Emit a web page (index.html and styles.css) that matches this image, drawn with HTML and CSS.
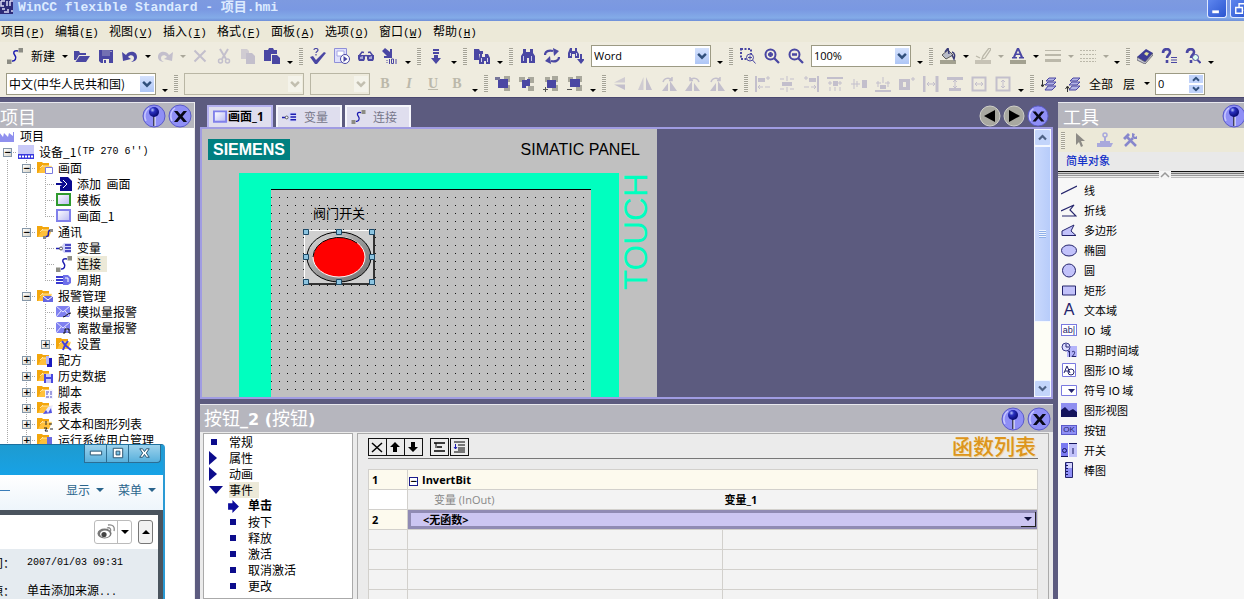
FILE: index.html
```html
<!DOCTYPE html>
<html lang="zh-CN">
<head>
<meta charset="utf-8">
<title>WinCC flexible Standard - 项目.hmi</title>
<link rel="stylesheet" href="styles.css">
</head>
<body>
<svg class="defs" aria-hidden="true">
  <defs>
    <radialGradient id="ball" cx=".35" cy=".3" r=".8"><stop offset="0" stop-color="#b8c4ff"/><stop offset=".3" stop-color="#2a30c0"/><stop offset="1" stop-color="#000060"/></radialGradient>
    <linearGradient id="ring" x1="0" y1="0" x2="1" y2="1"><stop offset="0" stop-color="#e0e0e0"/><stop offset=".5" stop-color="#9a9a9a"/><stop offset="1" stop-color="#6e6e6e"/></linearGradient>
    <linearGradient id="shade" x1="0" y1="0" x2="1" y2="1"><stop offset="0" stop-color="#fff"/><stop offset="1" stop-color="#b9b9f4"/></linearGradient>
  </defs>
  <symbol id="chev" viewBox="0 0 9 7"><path d="M1 1.500l3.500 3.500L8 1.500" fill="none" stroke="currentColor" stroke-width="2.200"/></symbol>
  <symbol id="conn" viewBox="0 0 16 16"><path d="M11 3C6 2 6 5 8 7.500S8 13.500 5 13" fill="none" stroke="#1c1cb0" stroke-width="1.500"/><path d="M0 11.500h4.500V16H0zM11.500 0H16v4.500h-4.500z" fill="#8c8c84"/></symbol>
  <symbol id="open" viewBox="0 0 16 16"><path d="M0 3h5l1 2h6v2H5l-3 5H0z"/><path d="M5.500 8H16l-4 6H1.500z"/></symbol>
  <symbol id="save" viewBox="0 0 16 16"><path fill-rule="evenodd" d="M1 2h14v13H3l-2-2zM4 2v6h8V2zM5 11v4h6v-4zM12.500 3v1h1V3z"/><path d="M4 2h8v6H4z" opacity=".75"/><path d="M6 12h2v3H6z"/></symbol>
  <symbol id="undo" viewBox="0 0 16 16"><path d="M0 4l1 9 8-2-3-2c2-3 6-2 6 1 0 2-1 3-3 4 5-.500 6-3 6-5 0-6-8-7-11-2z"/></symbol>
  <symbol id="redo" viewBox="0 0 16 16"><path d="M16 4l-1 9-8-2 3-2C8 6 4 7 4 10c0 2 1 3 3 4-5-.500-6-3-6-5 0-6 8-7 11-2z"/></symbol>
  <symbol id="x" viewBox="0 0 16 16"><path d="M2.500 2.500l11 11m0-11l-11 11" fill="none" stroke="currentColor" stroke-width="2"/></symbol>
  <symbol id="cut" viewBox="0 0 16 16"><path d="M4 1l6 10M12 1L6 11" fill="none" stroke="currentColor" stroke-width="2"/><circle cx="4.500" cy="13" r="2" fill="none" stroke="currentColor" stroke-width="1.500"/><circle cx="11.500" cy="13" r="2" fill="none" stroke="currentColor" stroke-width="1.500"/></symbol>
  <symbol id="copy" viewBox="0 0 16 16"><path d="M1 1h6l2 2v8H1z" opacity=".7"/><path d="M6 5h6l3 3v8H6z"/></symbol>
  <symbol id="paste" viewBox="0 0 16 16"><path d="M0 2h4l1-2h4l1 2h3v4H7v7H0z"/><path d="M8 7h5l3 3v6H8z"/></symbol>
  <symbol id="check" viewBox="0 0 16 16"><path d="M0 9l3-1 3 4 8-8 2 1-9 11H5z"/><path d="M4 2c0-2 4-2 4 0 0 1.500-2 1.500-2 3m0 1v1.500" fill="none" stroke="currentColor" stroke-width="1.200"/></symbol>
  <symbol id="run" viewBox="0 0 16 16"><path d="M.5.500h12v14H.5z" fill="#dfe0fb" stroke="#8f8fd8"/><path d="M3 3h7v5H3z" fill="#fff" stroke="#a6a6e4"/><circle cx="11" cy="11" r="4.500" fill="#fff" stroke="currentColor"/><path d="M9.500 8l4 3-4 3z"/></symbol>
  <symbol id="glass" viewBox="0 0 16 16"><path d="M1 8l3-4 2 .500M15 8l-3-4-2 .500M6 9c1-2 3-2 4 0" fill="none" stroke="currentColor" stroke-width="1.500"/><path d="M0 7h7v4l-1 2H1l-1-2zM9 7h7v4l-1 2h-5l-1-2z"/><path d="M2 9l3-1v3H2zM11 9l3-1v3h-3z" fill="#a8a8d8"/></symbol>
  <symbol id="trans" viewBox="0 0 16 16"><path d="M0 3l3-3 5 4V1h2v9H2V8h3z"/><path d="M7.500 11v5m2-5h2v4.500h-2zM14 11v5M5 12v1m0 1v1" fill="none" stroke="currentColor"/></symbol>
  <symbol id="down" viewBox="0 0 16 16"><path d="M5 1h6v2H5zM5 4h6v2H5zM6 7h4v3h3l-5 6-5-6h3z"/></symbol>
  <symbol id="bino" viewBox="0 0 16 16"><path d="M3 1h3v3h4V1h3v4l2 3v7H9v-5H7v5H1V8l2-3z"/><path d="M3 8h1v5H3zM11 8h1v5h-1z" fill="#c8c8e8"/></symbol>
  <symbol id="fbino" viewBox="0 0 16 16"><path d="M0 1h5l1 2h3v3H5v6H0z"/><path d="M6 6h2v3h3V6h3l2 4v6h-4v-3h-2v3H5v-5z"/><path d="M7 10h1v4H7zM13 10h1v4h-1z" fill="#d6d6ee"/></symbol>
  <symbol id="swap" viewBox="0 0 16 16"><path d="M1 7c0-4 4-5 8-4m6 6c0 4-4 5-8 4" fill="none" stroke="currentColor" stroke-width="2.200"/><path d="M9 0l6 3-5 5zM7 16l-6-3 5-5z"/></symbol>
  <symbol id="fnext" viewBox="0 0 16 16"><path d="M2 0h2v3h3V0h2v3l2 3v4H7V6H4v4H0V5z"/><path d="M12 6h2v5h3l-4 5-4-5h3z"/><path d="M2 5h1v3H2zM8 5h1v3H8z" fill="#d6d6ee"/></symbol>
  <symbol id="zsel" viewBox="0 0 16 16"><path d="M1 1h10v10H1z" fill="none" stroke="currentColor" stroke-width="2" stroke-dasharray="2 1.500"/><circle cx="10" cy="9.500" r="3.500" fill="#eeecde" stroke="currentColor"/><path d="M8 9.500h4m-2-2v4m2.500.5l3 3.500" fill="none" stroke="currentColor"/></symbol>
  <symbol id="zin" viewBox="0 0 16 16"><circle cx="6.500" cy="6.500" r="5" fill="none" stroke="currentColor" stroke-width="2"/><path d="M10 10l5 5M6.500 4v5M4 6.500h5" fill="none" stroke="currentColor" stroke-width="2.300"/></symbol>
  <symbol id="zout" viewBox="0 0 16 16"><circle cx="6.500" cy="6.500" r="5" fill="none" stroke="currentColor" stroke-width="2"/><path d="M10 10l5 5M4 6.500h5" fill="none" stroke="currentColor" stroke-width="2.300"/></symbol>
  <symbol id="bucket" viewBox="0 0 16 16"><path d="M0 12h16v4H0z" fill="#a3a190"/><path d="M2 7l6-5 5 5-7 4z" fill="#b9bcc8" stroke="#5c5c58"/><path d="M5 4l3-4 1 6M12 4c3 1 3 4 2 7l-2-4" fill="none" stroke="#3a3c78" stroke-width="1.500"/></symbol>
  <symbol id="pen" viewBox="0 0 16 16"><path d="M0 12h16v4H0z" opacity=".8"/><path d="M14 0l2 1-6 9-3 1 1-3zM1 8l4 2" fill="none" stroke="currentColor" stroke-width="1.300"/></symbol>
  <symbol id="acol" viewBox="0 0 16 16"><path d="M0 12h16v4H0z" fill="#a3a190"/><path fill-rule="evenodd" d="M7 0h2l4 9h1v1.500H9V9h1.500L10 7H6L5.300 9H7v1.500H2V9h1zM6.500 5.500h3L8 2.500z"/></symbol>
  <symbol id="lines" viewBox="0 0 16 16"><path d="M0 2h16v1H0zM0 6h16v2H0zM0 11h16v3H0z"/></symbol>
  <symbol id="dash" viewBox="0 0 16 16"><path d="M0 2.500h16M0 6.500h16M0 10.500h16M0 13.500h16" fill="none" stroke="currentColor" stroke-dasharray="2 1"/></symbol>
  <symbol id="book" viewBox="0 0 16 16"><path d="M0 9l9-8 7 4-8 9z" fill="#3d3d96"/><path d="M0 9l8 5 8-9v2l-8 9-8-4z" fill="#c8c8d8" stroke="#4c4c58" stroke-width=".7"/><path d="M7 6l2-2 3 1-2 3z" fill="#e0e09a"/></symbol>
  <symbol id="help1" viewBox="0 0 16 16"><path d="M2 5c0-5 7-5 7-1 0 3-3 3-3 6m0 2v3" fill="none" stroke="currentColor" stroke-width="2.600"/><path d="M10 9.500h6m-6 2.500h6m-6 2.500h6" stroke="currentColor"/></symbol>
  <symbol id="help2" viewBox="0 0 16 16"><path d="M2 5c0-5 7-5 7-1 0 3-3 3-3 6m0 2v3" fill="none" stroke="currentColor" stroke-width="2.600"/><circle cx="10.500" cy="9.500" r="3" fill="#dfe" stroke="currentColor"/><path d="M12.500 12l3 3" stroke="currentColor" stroke-width="2"/></symbol>
  <symbol id="ord1" viewBox="0 0 16 16"><path d="M9 0h6v6H9zM9 9h6v6H9z" fill="#a9a89c"/><path d="M3 3h10v9H3z"/><path d="M0 1h5v3H0z" fill="#77769a"/></symbol>
  <symbol id="ord2" viewBox="0 0 16 16"><path d="M0 1h6v5H0zM9 10h6v5H9zM9 1h6v6H9z" fill="#a9a89c"/><path d="M3 4h5V3h3v7H7v2H3z"/></symbol>
  <symbol id="ord3" viewBox="0 0 16 16"><path d="M2 1h5v5H2zM9 0h6v6H9zM9 9h6v6H9z" fill="#a9a89c"/><path d="M4 4h9v8H4z"/><path d="M0 13.500h5M2.500 11v5" stroke="#555"/></symbol>
  <symbol id="ord4" viewBox="0 0 16 16"><path d="M1 1h5v5H1zM9 0h6v6H9zM9 9h6v6H9z" fill="#a9a89c"/><path d="M3 3h10v8H3z"/><path d="M0 13.500h5" stroke="#555"/></symbol>
  <symbol id="flv" viewBox="0 0 16 16"><path d="M1 6.500L12 1v5.500z" opacity=".7"/><path d="M1 8.500h11V14z"/></symbol>
  <symbol id="flh" viewBox="0 0 16 16"><path d="M6.500 1v13H1z" opacity=".7"/><path d="M9 1v13h6z"/></symbol>
  <symbol id="rot" viewBox="0 0 16 16"><path d="M7 7v8H1zM9 5l7 10H9z"/><path d="M2 6c1-4 6-5 9-2m0-3v3.500H8" fill="none" stroke="currentColor" stroke-width="1.500"/></symbol>
  <symbol id="al1" viewBox="0 0 16 16"><path d="M1 0v16" stroke="currentColor" stroke-width="2"/><path d="M3 2h7v4H3z"/><path d="M3 11h5m2 0h5M5 9l-2 2 2 2m6-11h4m-2-2v4" fill="none" stroke="currentColor"/></symbol>
  <symbol id="al2" viewBox="0 0 16 16"><path d="M3 6h10v4H3z"/><path d="M8 0v5m0 6v5M1 3h4m6 0h4M1 13h4m6 0h4" stroke="currentColor"/></symbol>
  <symbol id="al3" viewBox="0 0 16 16"><path d="M0 1h16v2H0zM6 5h5v5H6z"/><path d="M3 5v4m10-4v4M3 11v4m5-4v4m5-4v4M1 7h4m6 0h4" stroke="currentColor"/></symbol>
  <symbol id="al4" viewBox="0 0 16 16"><path d="M11 4h5v8h-5z"/><path d="M0 8h9M3 3v10M6 5v6" stroke="currentColor"/></symbol>
  <symbol id="al5" viewBox="0 0 16 16"><path d="M0 14h16v2H0zM5 9h6v4H5z"/><path d="M3 5v6m10-6v6M1 7h5m4 0h5M8 1v6" stroke="currentColor"/></symbol>
  <symbol id="al6" viewBox="0 0 16 16"><path fill-rule="evenodd" d="M0 3h11v11H0zM4 6v5h3V6z"/><path d="M12 3h4m-2-2v4" stroke="currentColor"/></symbol>
  <symbol id="sp1" viewBox="0 0 16 16"><path d="M1 0v16M14 0v16" stroke="currentColor" stroke-width="3"/><path d="M4 8h8M6 6L4 8l2 2m4-4l2 2-2 2" fill="none" stroke="currentColor"/></symbol>
  <symbol id="sp2" viewBox="0 0 16 16"><path d="M0 1h16v3H0zM2 12h12v3H2z"/><path d="M8 4v8M6 6l2-2 2 2m-4 4l2 2 2-2" fill="none" stroke="currentColor"/></symbol>
  <symbol id="sp3" viewBox="0 0 16 16"><path d="M1.500 1.500h13v13h-13z" fill="none" stroke="currentColor" stroke-width="2"/><path d="M4 8h8M6 6L4 8l2 2m4-4l2 2-2 2" fill="none" stroke="currentColor"/></symbol>
  <symbol id="sp4" viewBox="0 0 16 16"><path d="M1.500 1.500h13v13h-13z" fill="none" stroke="currentColor" stroke-width="2"/><path d="M8 4v8M6 6l2-2 2 2m-4 4l2 2 2-2" fill="none" stroke="currentColor"/></symbol>
  <symbol id="layer" viewBox="0 0 16 16"><path d="M5 5l3-3h7l-3 3zM4 9l3-3h8l-3 3zM4 14l3-4h8l-4 4z" fill="#b4b4e4" stroke="#4a47a3"/></symbol>
  <symbol id="fold" viewBox="0 0 16 16"><path d="M0 2h5l1 1h6v10H0z" fill="#f3a60c"/><path d="M1 13L5 6h10l-3 7z" fill="#ffc03a"/><path d="M5 6h10M3 8l3-3" stroke="#fff0c0" stroke-width=".8"/></symbol>
  <symbol id="scr" viewBox="0 0 16 14"><path d="M1 1h13v11H1z" fill="url(#shade)" stroke="currentColor" stroke-width="2"/></symbol>
  <symbol id="tag" viewBox="0 0 16 12"><path d="M4 6l4-5h7v10H8z" fill="#d4d6fa"/><path d="M0 6.500h5M9 3h6M9 6h6M9 9h6" stroke="#1c1cb0" stroke-width="1.500"/><circle cx="5" cy="6.500" r="1.500" fill="#fff" stroke="#555"/></symbol>
  <symbol id="mail" viewBox="0 0 16 14"><path d="M0 1h14v11H0z" fill="#7f80f0"/><path d="M0 1l7 6 7-6M0 12l5-6m9 6L9 6" fill="none" stroke="#e6e6ff"/></symbol>
  <symbol id="pin" viewBox="0 0 24 24"><circle cx="12" cy="12" r="11" fill="#8f8ff6" stroke="#5a5ac8"/><path d="M4 17a10 10 0 0 1 3-13" fill="none" stroke="#c8c8ff" stroke-width="1.500"/><path d="M12 10v12" stroke="#111" stroke-width="1.300"/><path d="M13 12v10" stroke="#fff"/><circle cx="12" cy="8" r="5" fill="url(#ball)"/></symbol>
  <symbol id="close" viewBox="0 0 24 24"><circle cx="12" cy="12" r="11" fill="#8f8ff6" stroke="#5a5ac8"/><path d="M4 17a10 10 0 0 1 3-13" fill="none" stroke="#c8c8ff" stroke-width="1.500"/><path d="M6 7h3.500l3 3.500 3-3.500H19l-4.500 5.500L19 18h-3.500l-3-3.500-3 3.500H6l4.500-5.500z" fill="#080818"/></symbol>
</svg>

<header class="titlebar">
  <svg class="appicon" viewBox="0 0 14 15"><path d="M0 0h13v14H0z" fill="#2c2a78"/><path d="M1 1h4M1 1v5h3M7 1v5M10 1v5M10 1h3M2 9h3M8 9v4M4 12h3M11 11h2" stroke="#d9d9f4" stroke-width="1.500" fill="none"/></svg>
  <h1>WinCC flexible Standard - 项目.hmi</h1>
  <button class="wbtn" aria-label="最小化"><svg viewBox="0 0 18 18"><path d="M4 11h7v3H4z" fill="#fff"/></svg></button>
  <button class="wbtn" aria-label="还原"><svg viewBox="0 0 18 18"><path d="M8 8V4h8v7h-3M4.500 8h7v6h-7z" fill="none" stroke="#fff" stroke-width="1.500"/></svg></button>
</header>

<nav class="menu">
  <button>项目<span>(<u>P</u>)</span></button><button>编辑<span>(<u>E</u>)</span></button><button>视图<span>(<u>V</u>)</span></button><button>插入<span>(<u>I</u>)</span></button><button>格式<span>(<u>F</u>)</span></button><button>面板<span>(<u>A</u>)</span></button><button>选项<span>(<u>O</u>)</span></button><button>窗口<span>(<u>W</u>)</span></button><button>帮助<span>(<u>H</u>)</span></button>
</nav>

<div class="bar">
  <button class="tool" aria-label="新建"><svg><use href="#conn"/></svg></button><button class="txt">新建</button><button class="dd" aria-label="更多"></button>
  <button class="tool" aria-label="打开"><svg><use href="#open"/></svg></button>
  <button class="tool" aria-label="保存"><svg><use href="#save"/></svg></button>
  <button class="tool" aria-label="撤消"><svg><use href="#undo"/></svg></button><button class="dd" aria-label="更多"></button>
  <button class="tool off" aria-label="恢复"><svg><use href="#redo"/></svg></button><button class="dd off" aria-label="更多"></button>
  <button class="tool off" aria-label="删除"><svg><use href="#x"/></svg></button>
  <button class="tool off" aria-label="剪切"><svg><use href="#cut"/></svg></button>
  <button class="tool off" aria-label="复制"><svg><use href="#copy"/></svg></button>
  <button class="tool" aria-label="粘贴"><svg><use href="#paste"/></svg></button><button class="ov" aria-label="选项"></button>
  <i class="grip"></i>
  <button class="tool" aria-label="检查"><svg><use href="#check"/></svg></button>
  <button class="tool" aria-label="运行"><svg><use href="#run"/></svg></button>
  <button class="tool" aria-label="仿真"><svg><use href="#glass"/></svg></button>
  <button class="tool" aria-label="传送"><svg><use href="#trans"/></svg></button><button class="ov" aria-label="选项"></button>
  <i class="grip"></i>
  <button class="tool" aria-label="下载"><svg><use href="#down"/></svg></button><button class="ov" aria-label="选项"></button>
  <i class="grip"></i>
  <button class="tool" aria-label="在项目中查找"><svg><use href="#fbino"/></svg></button><button class="ov" aria-label="选项"></button>
  <i class="grip"></i>
  <button class="tool" aria-label="查找"><svg><use href="#bino"/></svg></button>
  <button class="tool" aria-label="替换"><svg><use href="#swap"/></svg></button>
  <button class="tool" aria-label="查找下一个"><svg><use href="#fnext"/></svg></button>
  <span class="combo w120"><select aria-label="查找内容"><option>Word</option></select><svg><use href="#chev"/></svg></span><button class="ov" aria-label="选项"></button>
  <i class="grip"></i>
  <button class="tool" aria-label="区域缩放"><svg><use href="#zsel"/></svg></button>
  <button class="tool" aria-label="放大"><svg><use href="#zin"/></svg></button>
  <button class="tool" aria-label="缩小"><svg><use href="#zout"/></svg></button>
  <span class="combo w100"><select aria-label="缩放"><option>100%</option></select><svg><use href="#chev"/></svg></span><button class="ov" aria-label="选项"></button>
  <i class="grip"></i>
  <button class="tool" aria-label="填充色"><svg><use href="#bucket"/></svg></button><button class="dd" aria-label="更多"></button>
  <button class="tool gray" aria-label="线条色"><svg><use href="#pen"/></svg></button><button class="dd off" aria-label="更多"></button>
  <button class="tool" aria-label="字体色"><svg><use href="#acol"/></svg></button><button class="dd" aria-label="更多"></button>
  <button class="tool gray" aria-label="线宽"><svg><use href="#lines"/></svg></button><button class="dd off" aria-label="更多"></button>
  <button class="tool gray" aria-label="线型"><svg><use href="#dash"/></svg></button><button class="dd off" aria-label="更多"></button><button class="ov" aria-label="选项"></button>
  <i class="grip"></i>
  <button class="tool" aria-label="帮助手册"><svg><use href="#book"/></svg></button>
  <button class="tool" aria-label="帮助目录"><svg><use href="#help1"/></svg></button>
  <button class="tool" aria-label="搜索帮助"><svg><use href="#help2"/></svg></button><button class="ov" aria-label="选项"></button>
</div>

<div class="bar second">
  <span class="combo w150"><select aria-label="语言"><option>中文(中华人民共和国)</option></select><svg><use href="#chev"/></svg></span><button class="ov" aria-label="选项"></button>
  <i class="grip"></i>
  <span class="combo w120 dis"><select aria-label="字体" disabled><option></option></select><svg><use href="#chev"/></svg></span>
  <span class="combo w60 dis"><select aria-label="字号" disabled><option></option></select><svg><use href="#chev"/></svg></span>
  <button class="tool gray fmt">B</button><button class="tool gray fmt it">I</button><button class="tool gray fmt un">U</button><button class="tool gray fmt">B</button><button class="ov" aria-label="选项"></button>
  <i class="grip"></i>
  <button class="tool" aria-label="置前"><svg><use href="#ord1"/></svg></button>
  <button class="tool" aria-label="置后"><svg><use href="#ord2"/></svg></button>
  <button class="tool" aria-label="前移"><svg><use href="#ord3"/></svg></button>
  <button class="tool" aria-label="后移"><svg><use href="#ord4"/></svg></button><button class="ov" aria-label="选项"></button>
  <i class="grip"></i>
  <button class="tool off" aria-label="垂直翻转"><svg><use href="#flv"/></svg></button>
  <button class="tool off" aria-label="水平翻转"><svg><use href="#flh"/></svg></button>
  <button class="tool off" aria-label="右转"><svg><use href="#rot"/></svg></button>
  <button class="tool off flip" aria-label="左转"><svg><use href="#rot"/></svg></button>
  <button class="tool off" aria-label="旋转"><svg><use href="#rot"/></svg></button><button class="ov" aria-label="选项"></button>
  <i class="grip"></i>
  <button class="tool off" aria-label="左对齐"><svg><use href="#al1"/></svg></button>
  <button class="tool off" aria-label="水平居中"><svg><use href="#al2"/></svg></button>
  <button class="tool off flip" aria-label="右对齐"><svg><use href="#al1"/></svg></button>
  <button class="tool off" aria-label="顶端对齐"><svg><use href="#al3"/></svg></button>
  <button class="tool off" aria-label="垂直居中"><svg><use href="#al4"/></svg></button>
  <button class="tool off" aria-label="底端对齐"><svg><use href="#al5"/></svg></button>
  <button class="tool off" aria-label="居中"><svg><use href="#al6"/></svg></button>
  <button class="tool off" aria-label="水平等距"><svg><use href="#sp1"/></svg></button>
  <button class="tool off" aria-label="垂直等距"><svg><use href="#sp2"/></svg></button>
  <button class="tool off" aria-label="等宽"><svg><use href="#sp3"/></svg></button>
  <button class="tool off" aria-label="等高"><svg><use href="#sp4"/></svg></button><button class="ov" aria-label="选项"></button>
  <i class="grip"></i>
  <button class="tool" aria-label="下移一层"><svg><use href="#layer"/><path d="M1.500 4v6m-2-2l2 3 2-3" fill="none" stroke="#333"/></svg></button>
  <button class="tool" aria-label="上移一层"><svg><use href="#layer"/><path d="M2.500 16v-5m-2 2l2-3 2 3" fill="none" stroke="#333"/></svg></button>
  <button class="txt">全部</button><button class="txt narrow">层</button><button class="dd" aria-label="更多"></button>
  <span class="combo spin"><input aria-label="层" value="0"><span><svg class="up"><use href="#chev"/></svg><svg><use href="#chev"/></svg></span></span>
</div>

<main class="work">
  <section class="project">
    <div class="phead"><h2>项目</h2><button class="round" aria-label="固定"><svg><use href="#pin"/></svg></button><button class="round" aria-label="关闭"><svg><use href="#close"/></svg></button></div>
    <ul class="tree">
      <li><svg class="pic" viewBox="0 0 16 14"><path d="M0 13V3l4 5 1-4 4 4 1-4 4 3V3h1v10z" fill="#8f90ee"/></svg>项目</li>
      <li><i class="c h"><button class="ex">−</button></i><svg class="pic" viewBox="0 0 16 14"><path d="M0 0h16v9H0z" fill="#c9caf8"/><path d="M0 9h16v5H0z" fill="#3a3adf"/><path d="M1 11.500h14" stroke="#fff" stroke-width="2" stroke-dasharray="2 1"/></svg>设备_1<span class="mono">(TP 270 6′′)</span></li>
      <li><i class="c v"></i><i class="c v h"><button class="ex">−</button></i><svg class="pic"><use href="#fold"/><path d="M8.500 7.500h7v6h-7z" fill="#fff" stroke="#7a7ae0"/></svg>画面</li>
      <li><i class="c v"></i><i class="c v"></i><i class="c v h"></i><svg class="pic" viewBox="0 0 16 14"><path d="M4 0h8l4 4v10H4V9l4-2-4-3z" fill="#0a0a90"/><path d="M0 7h10M8 3l4 4-4 4" stroke="#0a0a90" fill="none" stroke-width="2"/><path d="M7 3l4 4-4 4" stroke="#fff" fill="none"/></svg>添加&nbsp; 画面</li>
      <li><i class="c v"></i><i class="c v"></i><i class="c v h"></i><svg class="pic green"><use href="#scr"/></svg>模板</li>
      <li><i class="c v"></i><i class="c v"></i><i class="c e h"></i><svg class="pic lav"><use href="#scr"/></svg>画面_1</li>
      <li><i class="c v"></i><i class="c v h"><button class="ex">−</button></i><svg class="pic"><use href="#fold"/><path d="M14 6c-4 0-2 4-3 6l-3 1" stroke="#1c1cb0" fill="none" stroke-width="1.500"/><path d="M6 12h3v3H6zM13 5h3v3h-3z" fill="#888"/></svg>通讯</li>
      <li><i class="c v"></i><i class="c v"></i><i class="c v h"></i><svg class="pic"><use href="#tag"/></svg>变量</li>
      <li><i class="c v"></i><i class="c v"></i><i class="c v h"></i><svg class="pic"><use href="#conn"/></svg><span class="hot">连接</span></li>
      <li><i class="c v"></i><i class="c v"></i><i class="c e h"></i><svg class="pic" viewBox="0 0 16 14"><path d="M0 4h9M0 7h9M0 10h9" stroke="#3a3ad0" stroke-width="2"/><path d="M7 2h5l3 3v5l-3 2H7z" fill="#6f70ea"/><path d="M9 5h3v4" stroke="#fff" fill="none"/></svg>周期</li>
      <li><i class="c v"></i><i class="c v h"><button class="ex">−</button></i><svg class="pic"><use href="#fold"/><path d="M6 8h10v6H6z" fill="#6465e0"/><path d="M6 8l5 4 5-4" stroke="#fff" fill="none"/></svg>报警管理</li>
      <li><i class="c v"></i><i class="c v"></i><i class="c v h"></i><svg class="pic"><use href="#mail"/><path d="M7 13c3 0 4-4 8-4" stroke="#111" fill="none"/></svg>模拟量报警</li>
      <li><i class="c v"></i><i class="c v"></i><i class="c v h"></i><svg class="pic"><use href="#mail"/><path d="M7 13h2V9h4v4h2" stroke="#111" fill="none"/></svg>离散量报警</li>
      <li><i class="c v"></i><i class="c v"></i><i class="c e h"><button class="ex">+</button></i><svg class="pic"><use href="#fold"/><path d="M6 5l3 4 3-4M9 9l-2 5M9 9l6 5" stroke="#4040e0" fill="none" stroke-width="2"/></svg>设置</li>
      <li><i class="c v"></i><i class="c v h"><button class="ex">+</button></i><svg class="pic"><use href="#fold"/><path d="M9 4h3v8H9z" fill="#b5b6f8"/><path d="M12 6h3v9h-5v-3h2z" fill="#1b1bc0"/></svg>配方</li>
      <li><i class="c v"></i><i class="c v h"><button class="ex">+</button></i><svg class="pic"><use href="#fold"/><path d="M7 6h9v9H7z" fill="#c8c8fa"/><path fill-rule="evenodd" d="M7 6h9v9H7zM9 6v3h5V6zM9 11v4h5v-4z" fill="#4848e0"/></svg>历史数据</li>
      <li><i class="c v"></i><i class="c v h"><button class="ex">+</button></i><svg class="pic"><use href="#fold"/><path d="M8 6h8v9H8z" fill="#f4f4ff"/><path d="M9 8h3m1 0h2m-6 2h2m2 0h2m-6 3h3m1 0h2" stroke="#4848c0"/></svg>脚本</li>
      <li><i class="c v"></i><i class="c v h"><button class="ex">+</button></i><svg class="pic"><use href="#fold"/><path d="M6 14l5-7 5-2-3 9z" fill="#e8e8ff"/><path d="M6 14l3-4 2 3 3-5 1 5z" fill="#5253e0"/></svg>报表</li>
      <li><i class="c v"></i><i class="c v h"><button class="ex">+</button></i><svg class="pic"><use href="#fold"/><path d="M9 5v4M7 12h3l-2 3h3M12 8h3m-2 5h3" stroke="#222" fill="none"/></svg>文本和图形列表</li>
      <li><i class="c v"></i><i class="c v h"><button class="ex">+</button></i><svg class="pic"><use href="#fold"/><path d="M10 5h5v9h-5z" fill="#6b6be0"/></svg>运行系统用户管理</li>
    </ul>
  </section>

  <section class="center">
    <div class="tabs">
      <button class="tab on"><svg class="lav"><use href="#scr"/></svg><b>画面_1</b></button>
      <button class="tab"><svg><use href="#tag"/></svg>变量</button>
      <button class="tab"><svg><use href="#conn"/></svg>连接</button>
      <div class="nav">
        <button aria-label="上一个"><svg viewBox="0 0 22 22"><circle cx="11" cy="11" r="10" fill="#a8a8a0" stroke="#d0d0c8"/><path d="M16 5v12L5 11z" fill="#000"/></svg></button>
        <button aria-label="下一个"><svg viewBox="0 0 22 22"><circle cx="11" cy="11" r="10" fill="#a8a8a0" stroke="#d0d0c8"/><path d="M6 5v12l11-6z" fill="#000"/></svg></button>
        <button aria-label="关闭"><svg><use href="#close"/></svg></button>
      </div>
    </div>

    <div class="editor">
      <div class="device">
        <div class="dhead"><strong>SIEMENS</strong><span>SIMATIC PANEL</span></div>
        <div class="dbody">
          <div class="bezel">
            <div class="screen">
              <span class="lbl">阀门开关</span>
              <svg class="knob" viewBox="0 0 72 56">
                <path d="M1 1h70v54H1z" fill="#d0d0d0"/><path d="M1.500 55V1.500H70" fill="none" stroke="#fff"/><path d="M1 55h70V1" fill="none" stroke="#000" stroke-width="1.500"/>
                <ellipse cx="36" cy="28" rx="32" ry="25" fill="url(#ring)" stroke="#000"/>
                <ellipse cx="36" cy="28" rx="26" ry="20" fill="red" stroke="#fff"/><path d="M10 28a26 20 0 0 1 44-14" fill="none" stroke="#000"/>
                <g fill="#8cc4e0" stroke="#1c4a68"><path d="M.500.500h5v5h-5zM33.500.500h5v5h-5zM66.500.500h5v5h-5zM.500 25.500h5v5h-5zM66.500 25.500h5v5h-5zM.500 50.500h5v5h-5zM33.500 50.500h5v5h-5zM66.500 50.500h5v5h-5z"/></g>
              </svg>
            </div>
          </div>
          <div class="touch">TOUCH</div>
        </div>
      </div>
      <div class="scroll"><span class="sb up"><svg><use href="#chev"/></svg></span><span class="thumb"></span><span class="trough"></span><span class="sb"><svg><use href="#chev"/></svg></span></div>
    </div>

    <div class="props">
      <div class="phead"><h2>按钮<b>_2 (</b>按钮<b>)</b></h2><button class="round" aria-label="固定"><svg><use href="#pin"/></svg></button><button class="round" aria-label="关闭"><svg><use href="#close"/></svg></button></div>
      <div class="pbody">
        <ul class="cats">
          <li><i class="sq"></i>常规</li>
          <li><i class="tri"></i>属性</li>
          <li><i class="tri"></i>动画</li>
          <li><i class="tri dn"></i><span class="hot">事件</span></li>
          <li class="sub"><svg viewBox="0 0 12 12"><path d="M1 3h4V0l6 6-6 6V9H1z" fill="#0c0c9c"/></svg><b>单击</b></li>
          <li class="sub"><i class="sq"></i>按下</li>
          <li class="sub"><i class="sq"></i>释放</li>
          <li class="sub"><i class="sq"></i>激活</li>
          <li class="sub"><i class="sq"></i>取消激活</li>
          <li class="sub"><i class="sq"></i>更改</li>
        </ul>
        <div class="funcs">
          <div class="fhead">
            <button aria-label="删除"><svg viewBox="0 0 16 16"><path d="M3 4l10 9m0-9L3 13" stroke="#000" stroke-width="1.500"/></svg></button>
            <button aria-label="上移"><svg viewBox="0 0 16 16"><path d="M8 3l5 5h-3v5H6V8H3z"/></svg></button>
            <button aria-label="下移"><svg viewBox="0 0 16 16"><path d="M8 13l5-5h-3V3H6v5H3z"/></svg></button>
            <button class="apart" aria-label="折叠"><svg viewBox="0 0 16 16"><path d="M3 4h11M3 12h11M6 8h5" stroke="#000" stroke-width="1.500"/><path d="M5 4v5" stroke="#000"/></svg></button>
            <button class="gap" aria-label="展开"><svg viewBox="0 0 16 16"><path d="M3 3h11M7 6h7M7 9h7M7 11h7M3 13h11" stroke="#000"/><path d="M4.500 5v5m-1.500-2l1.500 2L6 8" fill="none" stroke="#1c1cb0"/></svg></button>
            <h3>函数列表</h3>
          </div>
          <table>
            <colgroup><col class="num"><col><col></colgroup>
            <tr class="cream"><th>1</th><td colspan="2"><button class="mini">−</button><b>InvertBit</b></td></tr>
            <tr><th class="white"></th><td class="param">变量 (InOut)</td><td class="nl"><b>变量_1</b></td></tr>
            <tr class="cream"><th>2</th><td colspan="2" class="cell"><div class="pick"><select aria-label="函数"><option>&lt;无函数&gt;</option></select><span class="darr"></span></div></td></tr>
            <tr><th></th><td></td><td></td></tr>
            <tr><th></th><td></td><td></td></tr>
            <tr><th></th><td></td><td></td></tr>
            <tr><th></th><td></td><td></td></tr>
          </table>
        </div>
      </div>
    </div>
  </section>

  <section class="tools">
    <div class="phead"><h2>工具</h2><button class="round" aria-label="固定"><svg><use href="#pin"/></svg></button></div>
    <div class="tbar"><i class="grip"></i>
      <button class="tool" aria-label="选择"><svg viewBox="0 0 16 16"><path d="M4 1v12l3-3 2 5 2-1-2-5h4z" fill="#8d8b86"/></svg></button>
      <button class="tool" aria-label="图章"><svg viewBox="0 0 16 16"><path d="M0 11h16l-2 4H0zM7 5h2v4h4v2H3V9h4z" fill="#a9a9dc"/><circle cx="8" cy="3" r="2" fill="none" stroke="#a9a9dc" stroke-width="1.500"/></svg></button>
      <button class="tool" aria-label="工具"><svg viewBox="0 0 16 16"><path d="M5 5l9 9M11 6l-8 8" stroke="#8787cc" stroke-width="2.500"/><path d="M1 6l5-5 2 2-5 5zM10 1v4l2 2h3V4l-2 1-1-1 1-2z" fill="#8787cc"/></svg></button>
    </div>
    <button class="group">简单对象</button>
    <div class="split"><svg viewBox="0 0 12 8"><path d="M0 0h12v8H0z" fill="#f5f5f5"/><path d="M2 6l4-4 4 4" fill="none" stroke="#999" stroke-width="1.500"/></svg></div>
    <ul class="objs">
      <li><svg viewBox="0 0 16 16"><path d="M0 12L16 4" stroke="#24246c" stroke-width="1.300"/></svg>线</li>
      <li><svg viewBox="0 0 16 16"><path d="M0 9l13-6-4 5 6 6H1" fill="none" stroke="#24246c" stroke-width="1.200"/></svg>折线</li>
      <li><svg viewBox="0 0 16 16"><path d="M1 13.500V9l12-6-3 6 5 4.500z" fill="#c2c2fa" stroke="#24246c"/></svg>多边形</li>
      <li><svg viewBox="0 0 16 16"><ellipse cx="8" cy="8.500" rx="7.500" ry="5.500" fill="#c2c2fa" stroke="#24246c"/></svg>椭圆</li>
      <li><svg viewBox="0 0 16 16"><circle cx="8" cy="8.500" r="6.500" fill="#c2c2fa" stroke="#24246c"/></svg>圆</li>
      <li><svg viewBox="0 0 16 16"><path d="M1.500 4h13v9h-13z" fill="#c2c2fa" stroke="#24246c"/></svg>矩形</li>
      <li><i class="letter">A</i>文本域</li>
      <li><i class="box">ab|</i>IO&nbsp; 域</li>
      <li><svg viewBox="0 0 16 16"><path d="M6 4h10v11H6z" fill="#b4b4fa"/><circle cx="5" cy="5" r="4" fill="#dcdcff" stroke="#3a3a8a"/><path d="M5 2v3h3" fill="none" stroke="#24246c"/><path d="M7 10l1.500-1v6M11 10c3-2 4 1 0 4.500h4" fill="none" stroke="#24246c"/></svg>日期时间域</li>
      <li><svg viewBox="0 0 16 16"><path d="M1.500 1.500h13v13h-13z" fill="#fff" stroke="#7a7ae0"/><path d="M3 11l3-7 3 7M4 9h4" fill="none" stroke="#24246c"/><circle cx="10" cy="10" r="3" fill="none" stroke="#24246c"/></svg>图形 IO 域</li>
      <li><svg viewBox="0 0 16 16"><path d="M.5 3.500h15v10H.5z" fill="#fff" stroke="#7a7ae0"/><path d="M7 7h7l-3.500 4z" fill="#24246c"/></svg>符号 IO 域</li>
      <li><svg viewBox="0 0 16 16"><path d="M0 1h16v14H0z" fill="#8f8ff0"/><path d="M0 15V8l4-3 4 4 4-2 4 3v5z" fill="#14145c"/></svg>图形视图</li>
      <li><i class="box ok">OK</i>按钮</li>
      <li><svg viewBox="0 0 16 16"><path d="M0 1h7v14H0z" fill="#7a7af0"/><path d="M8 2h8v13H8z" fill="#c2c2fa"/><path d="M0 14.500h7M8 1.500h8M12 6v6" stroke="#14145c"/><circle cx="3.500" cy="8.500" r="2" fill="none" stroke="#14145c"/></svg>开关</li>
      <li><svg viewBox="0 0 16 16"><path d="M4.500.500h7v15h-7z" fill="#8f8ff6" stroke="#24246c"/><path d="M6 1h5v5H6z" fill="#d4d4fc"/><path d="M5 3.500h2m-2 3h2m-2 3h2m-2 3h2" stroke="#14145c"/></svg>棒图</li>
    </ul>
  </section>
</main>

<aside class="popup">
  <div class="ptitle"><button aria-label="最小化"><svg viewBox="0 0 22 18"><path d="M5.500 6.500h12v4h-12z" fill="#fff" stroke="#24506c"/></svg></button><button aria-label="最大化"><svg viewBox="0 0 22 18"><path fill-rule="evenodd" d="M6.500 3.500h10v10h-10zM9.500 6.500v4h4v-4z" fill="#fff" stroke="#24506c"/></svg></button><button class="last" aria-label="关闭"><svg viewBox="0 0 32 18"><path d="M11 4h3l2 3 2-3h3l-3 4.500 3 4.500h-3l-2-3-2 3h-3l3-4.500z" fill="#fff" stroke="#24506c"/></svg></button></div>
  <div class="pmenu"><i></i><button>显示</button><button>菜单</button></div>
  <div class="pframe">
    <div class="prow">
      <span class="share"><button aria-label="微博"><svg viewBox="0 0 18 16"><ellipse cx="7.500" cy="9.500" rx="7" ry="5" fill="#777"/><ellipse cx="8" cy="10" rx="5" ry="3.500" fill="#fff"/><circle cx="7" cy="10.500" r="2.600" fill="#444"/><path d="M10 4c3-1 4 1 3.500 3M11 1c5-1 7 2 6 6" fill="none" stroke="#888" stroke-width="1.300"/></svg></button><button class="dn" aria-label="更多"></button></span>
      <button class="upb" aria-label="收起"></button>
    </div>
    <dl><dt>间：</dt><dd class="mono">2007/01/03 09:31</dd><dt>源：</dt><dd>单击添加来源<span class="mono">...</span></dd></dl>
  </div>
</aside>
</body>
</html>
```
FILE: styles.css
```css
* { box-sizing: border-box; }
:root {
  --ink: #4a47a3;
  --face: #ece9d8;
  --dark: #5c5b7f;
  --lav: #a09ce2;
  --head: #b6b6be;
}
body {
  margin: 0;
  height: 100vh;
  display: flex;
  flex-direction: column;
  overflow: hidden;
  background: var(--dark);
  color: #000;
  font: 12px/16px "Noto Sans CJK SC", sans-serif;
}
button, select, input {
  font: inherit;
  color: inherit;
  border: 0;
  padding: 0;
  margin: 0;
  background: none;
  border-radius: 0;
}
ul, dl, dd, h1, h2, h3 { margin: 0; padding: 0; list-style: none; font-weight: normal; }
i { font-style: normal; }
svg { display: block; flex: none; fill: currentColor; }
.defs { position: absolute; width: 0; height: 0; }
.mono { font-family: "Liberation Mono", monospace; font-size: 10px; white-space: pre; }

/* window title */
.titlebar {
  flex: none;
  height: 21px;
  display: flex;
  align-items: flex-start;
  overflow: hidden;
  background: linear-gradient(#7d9ae0, #7a98e2 45%, #83abe8 85%, #6f8fd8);
}
.titlebar h1 {
  flex: 1;
  padding-left: 4px;
  color: #dcebff;
  font: bold 13px/16px "Liberation Mono", "Noto Sans CJK SC", monospace;
  white-space: nowrap;
}
.appicon { width: 14px; height: 15px; }
.wbtn {
  width: 20px;
  height: 18px;
  margin-left: 3px;
  border: 1px solid #dfe8ff;
  border-top: 0;
  border-radius: 0 0 3px 3px;
  background: linear-gradient(135deg, #5e86ee, #2a55d0);
}
.wbtn:last-child { margin-right: -6px; }
.wbtn svg { width: 18px; height: 17px; }

/* menu and toolbars */
.menu { flex: none; height: 21px; display: flex; background: var(--face); }
.menu button { width: 54px; padding-left: 1px; text-align: left; white-space: nowrap; }
.menu span { font: 11px/16px "Liberation Mono", monospace; }
.bar {
  flex: none;
  height: 28px;
  display: flex;
  align-items: center;
  padding-left: 3px;
  background: #efecdf;
  color: var(--ink);
}
.bar.second { height: 27px; }
.bar > * { flex: none; }
.tool { width: 24px; height: 22px; display: grid; place-items: center; }
.tool svg { width: 16px; height: 16px; }
.off { color: #c3bfcc; }
.gray { color: #bbb8aa; }
.flip svg { transform: scaleX(-1); }
.fmt { font: bold 14px/16px "Liberation Serif", serif; }
.it { font-style: italic; }
.un { text-decoration: underline; }
.txt { width: 32px; color: #000; text-align: center; white-space: nowrap; }
.txt.narrow { width: 24px; }
.dd, .ov { width: 11px; height: 22px; display: grid; place-items: center; }
.ov { width: 12px; place-items: end center; padding-bottom: 3px; }
.dd::after, .ov::after { content: ""; border: 3px solid transparent; border-top-color: #000; border-bottom: 0; }
.dd.off::after { border-top-color: #aaa79a; }
.grip {
  width: 4px;
  height: 17px;
  margin: 0 3px;
  background: repeating-linear-gradient(#a5a396 0 1px, #f4f2e8 1px 2px);
}
.combo {
  height: 22px;
  margin: 0 3px;
  display: flex;
  align-items: center;
  border: 1px solid #9c9a84;
  background: #fff;
  color: #000;
}
.combo select, .combo input {
  flex: 1;
  min-width: 0;
  height: 20px;
  padding-left: 2px;
  appearance: none;
  outline: 0;
  font: 11px/18px "Open Sans", sans-serif;
}
.combo.w150 select { font: 12px/18px "Noto Sans CJK SC", sans-serif; }
.combo > svg {
  width: 14px;
  height: 16px;
  padding: 4px 2px;
  margin-right: 1px;
  color: #31507c;
  background: linear-gradient(#d5e2fd, #aec6f6);
}
.combo.dis { background: #eeebdd; border-color: #b9b6a4; }
.combo.dis > svg { color: #c2bfb0; background: #f4f3ea; }
.w150 { width: 150px; }
.w120 { width: 120px; }
.w100 { width: 100px; }
.w60 { width: 60px; }
.spin { width: 50px; }
.spin > span { width: 14px; margin-right: 1px; display: grid; gap: 2px; color: #31507c; }
.spin span svg { width: 14px; height: 8px; padding: 1px 3px; background: #c1d3fa; }
.up svg, svg.up { transform: scaleY(-1); }

/* panels */
.work { flex: 1; min-height: 0; display: flex; gap: 5px; padding-top: 4px; border-top: 1px solid #4a4870; }
.phead {
  height: 26px;
  flex: none;
  display: flex;
  align-items: center;
  gap: 2px;
  padding-right: 2px;
  border-top: 1px solid #e8e8ee;
  background: var(--head);
}
.phead h2 { flex: 1; color: #fff; font-size: 18px; line-height: 24px; white-space: nowrap; }
.round, .round svg { width: 24px; height: 24px; }
.project { width: 195px; flex: none; background: #fff; border-right: 1px solid #eee; overflow: hidden; }
.hot { background: #ece9d8; padding-right: 6px; }
.tree li { height: 16px; display: flex; align-items: center; margin-left: -2px; white-space: nowrap; }
.pic { width: 16px; height: 16px; margin: 0 5px 0 1px; }
.green { color: #2f9a2f; }
.lav { color: #8080ea; }
.c {
  width: 19px;
  height: 16px;
  flex: none;
  display: grid;
  place-items: center;
  --v: repeating-linear-gradient(#a8a8a8 0 1px, transparent 1px 2px);
  --hz: repeating-linear-gradient(90deg, #a8a8a8 0 1px, transparent 1px 2px);
  background-repeat: no-repeat;
}
.c.h { background-image: var(--hz); background-size: 10px 1px; background-position: 9px 8px; }
.c.v { background-image: var(--v); background-size: 1px 16px; background-position: 9px 0; }
.c.v.h { background-image: var(--v), var(--hz); background-size: 1px 16px, 10px 1px; background-position: 9px 0, 9px 8px; }
.c.e.h { background-image: var(--v), var(--hz); background-size: 1px 8px, 10px 1px; background-position: 9px 0, 9px 8px; }
.ex, .mini {
  width: 9px;
  height: 9px;
  border: 1px solid #8597a8;
  background: linear-gradient(135deg, #fff, #d6d2c6);
  font: bold 9px/7px "DejaVu Sans", sans-serif;
  text-align: center;
}

/* editor column */
.center { flex: 1; min-width: 0; display: grid; grid-template-rows: 25px 1fr 200px; }
.tabs { display: flex; gap: 3px; padding: 3px 4px 0 7px; }
.tab {
  width: 66px;
  display: flex;
  align-items: center;
  gap: 7px;
  padding: 0 4px;
  border: 2px solid #f6f6fc;
  border-bottom: 0;
  background: #dfdeee;
  color: #77778a;
  line-height: 14px;
  white-space: nowrap;
}
.tab svg { width: 15px; height: 14px; }
.tab.on { gap: 0; border-color: #b5b1f0; color: #000; }
.nav { margin-left: auto; display: flex; gap: 2px; }
.nav svg { width: 22px; height: 22px; margin-top: -1px; }
.editor { min-height: 0; display: flex; border: 2px solid var(--lav); overflow: hidden; }
.device { width: 455px; display: flex; flex-direction: column; background: #c0c0c0; padding-top: 10px; }
.dhead {
  display: flex;
  justify-content: space-between;
  padding: 0 17px 0 6px;
  font: 16px/21px "Liberation Sans", sans-serif;
}
.dhead strong { padding: 0 5px; color: #fff; background: #008080; }
.dbody { flex: 1; min-height: 0; display: flex; padding: 13px 0 0 37px; }
.bezel { width: 380px; display: flex; padding: 16px 28px 0 32px; background: #00ffbf; }
.screen {
  position: relative;
  flex: 1;
  border-top: 1px solid #000;
  background:
    linear-gradient(90deg, transparent 1px, #c0c0c0 1px) 0 0 / 8px 8px,
    linear-gradient(#111 1px, #c0c0c0 1px) 0 7px / 8px 8px;
}
.lbl { position: absolute; left: 42px; top: 14px; font-size: 13px; line-height: 17px; }
.knob { position: absolute; left: 32px; top: 39px; width: 72px; height: 56px; }
.touch {
  writing-mode: vertical-rl;
  transform: rotate(180deg);
  color: #00ffbf;
  font: 33px/34px "Liberation Sans", sans-serif;
  text-align: right;
}
.scroll { width: 17px; margin-left: auto; display: flex; flex-direction: column; background: #fdfdf6; }
.sb { height: 17px; flex: none; display: grid; place-items: center; border: 1px solid #f4f8ff; border-radius: 2px; background: #c3d5fb; color: #4d6185; }
.sb svg { width: 9px; height: 7px; }
.thumb {
  flex: 3 1 0;
  border: 1px solid #f4f8ff;
  background: repeating-linear-gradient(#eef4ff 0 1px, #8fb0e8 1px 2px) center / 7px 8px no-repeat, linear-gradient(90deg, #c9d8fc, #b7ccfa);
}
.trough { flex: 1 1 0; }

/* properties */
.props { margin-top: 5px; display: flex; flex-direction: column; min-height: 0; background: #ebebeb; overflow: hidden; }
.props .phead { height: 28px; padding-left: 4px; }
.props .phead h2 b { font-family: "DejaVu Sans", sans-serif; font-size: 16px; }
.pbody { flex: 1; min-height: 0; display: flex; gap: 4px; padding: 1px 4px 0 3px; }
.cats { width: 150px; flex: none; background: #fff; border: 1px solid #aaa; }
.cats li { height: 16px; display: flex; align-items: center; gap: 8px; padding-left: 4px; }
.cats li > :first-child { width: 13px; flex: none; }
.cats .sub { padding-left: 23px; }
.sq::after { content: ""; display: block; width: 6px; height: 6px; margin-left: 3px; background: #0c0c8c; }
.tri::after { content: ""; display: block; width: 0; border: 7px solid transparent; border-left: 8px solid #0c0c8c; border-right: 0; margin-left: 1px; }
.tri.dn::after { border: 7px solid transparent; border-top: 8px solid #0c0c8c; border-bottom: 0; }
.funcs { flex: 1; min-width: 0; border: 1px solid #aaa; border-bottom: 0; padding: 4px 10px 0; }
.fhead { height: 21px; display: flex; align-items: flex-start; border-bottom: 1px solid #777; }
.fhead button { width: 19px; height: 18px; margin-right: -1px; border: 1px solid #111; }
.fhead button svg { width: 16px; height: 16px; }
.fhead .apart { margin-left: 8px; }
.fhead .gap { margin-left: 2px; }
.fhead h3 { margin-left: auto; padding-right: 2px; color: #dd951c; font-size: 21px; font-weight: 500; line-height: 14px; text-shadow: 1px 1px 0 #f0dca8; }
table { width: 100%; margin-top: 10px; border-collapse: collapse; table-layout: fixed; background: #f3f3f3; }
.num { width: 39px; }
th, td { height: 20px; padding: 0; border: 1px solid #d2d0cc; line-height: 16px; text-align: left; }
td { font-size: 11px; }
b { font-family: "Open Sans", "Noto Sans CJK SC", sans-serif; font-weight: 700; }
th { padding-left: 3px; font: bold 11px/16px "Open Sans", sans-serif; }
th.white { background: #fff; }
.cream th, .cream td { background: #fdfaee; }
.mini { margin: 0 4px 0 1px; border-color: #1c1c8c; background: #fff; }
td.param { padding-left: 26px; color: #888; border-right: 0; font-family: "Open Sans", "Noto Sans CJK SC", sans-serif; }
td.nl { border-left: 0; padding-left: 2px; }
.pick { height: 19px; display: flex; align-items: center; border: 3px solid #908bb4; border-right-width: 1px; background: #ccc6f2; }
.pick select { flex: 1; height: 13px; padding-left: 12px; appearance: none; font: bold 11px/13px "Open Sans", "Noto Sans CJK SC", sans-serif; }
.darr { width: 15px; height: 15px; display: grid; place-items: center; border-right: 1px solid #222; border-bottom: 1px solid #222; }
.darr::after { content: ""; border: 4px solid transparent; border-top-color: #10103c; border-bottom: 0; }

/* toolbox */
.tools { width: 186px; flex: none; background: #f7f7f7; overflow: hidden; }
.tools .phead { padding: 0 0 0 5px; }
.tools .phead .round { margin-right: -2px; }
.tbar { height: 24px; display: flex; align-items: center; background: var(--face); }
.tbar .tool { margin-right: 1px; }
.group { width: 100%; height: 19px; padding: 0 8px 4px; background: #e9e9e9; color: #1230c8; font-size: 11px; font-weight: 500; text-align: left; }
.split {
  height: 8px;
  display: flex;
  justify-content: center;
  padding-left: 28px;
  background: linear-gradient(#111 0 1px, #ccc 1px 2px, #777 2px 3px, #ddd 3px 4px, #999 4px 5px, #eee 5px 6px, #bbb 6px 7px, #f7f7f7 7px);
}
.split svg { width: 12px; height: 8px; }
.objs { padding: 1px 0 0 3px; }
.objs li { height: 20px; display: flex; align-items: center; gap: 7px; font-size: 11px; white-space: nowrap; }
.objs svg { width: 16px; height: 16px; }
.objs i { width: 16px; flex: none; text-align: center; color: #24246c; }
.objs .letter { font: 16px/18px "Liberation Sans", sans-serif; }
.box { border: 1px solid #7a7ae0; background: #fff; font: 9px/10px "Liberation Sans", sans-serif; }
.box.ok { background: #8f8ff6; border-color: #5a5ac8; font-size: 8px; line-height: 8px; }

/* floating window */
.popup {
  position: absolute;
  left: 0;
  top: 444px;
  bottom: 0;
  width: 165px;
  display: flex;
  flex-direction: column;
  border-right: 2px solid #2a9ad4;
  border-top: 1px solid #1c6f9e;
  border-radius: 0 4px 0 0;
  background: #1a9fe0;
  overflow: hidden;
}
.ptitle { height: 30px; display: flex; justify-content: flex-end; padding-right: 2px; background: linear-gradient(#1e9bd0, #17a2e6); }
.ptitle button { height: 18px; width: 23px; border: 1px solid #2c6e94; border-top: 0; background: linear-gradient(#9dd2ec, #58b0dc); margin-left: -1px; }
.ptitle .last { width: 33px; border-radius: 0 0 4px 0; }
.ptitle svg { height: 17px; width: 100%; }
.pmenu { height: 35px; display: flex; align-items: flex-start; padding-top: 7px; background: linear-gradient(#fff, #eef5fb); color: #2a648c; }
.pmenu i { width: 10px; height: 1px; margin: 8px auto 0 0; background: #3a7cb8; }
.pmenu button { display: flex; align-items: center; gap: 6px; margin-right: 7px; padding-left: 7px; }
.pmenu button::after, .dn::after { content: ""; border: 4px solid transparent; border-top-color: currentColor; border-bottom: 0; }
.pframe { flex: 1; min-height: 0; padding-top: 5px; background: #e5ebf0; border-right: 5px solid #4a545e; box-shadow: inset 0 5px #4a545e; }
.prow { height: 34px; display: flex; align-items: center; justify-content: flex-end; gap: 6px; padding-right: 5px; background: #fff; }
.share { display: flex; border: 1px solid #bbb; border-radius: 3px; }
.share button { height: 22px; width: 22px; display: grid; place-items: center; }
.share svg { width: 18px; height: 16px; }
.share .dn { width: 14px; border-left: 1px solid #bbb; }
.upb { width: 15px; height: 24px; display: grid; place-items: center; border: 1px solid #777; border-radius: 3px; background: #f2f2f2; }
.upb::after { content: ""; border: 4px solid transparent; border-bottom-color: #000; border-top: 0; }
dl { display: grid; grid-template-columns: 27px 1fr; grid-auto-rows: 28px; align-items: center; white-space: nowrap; }
dt { margin-left: -9px; }
```
